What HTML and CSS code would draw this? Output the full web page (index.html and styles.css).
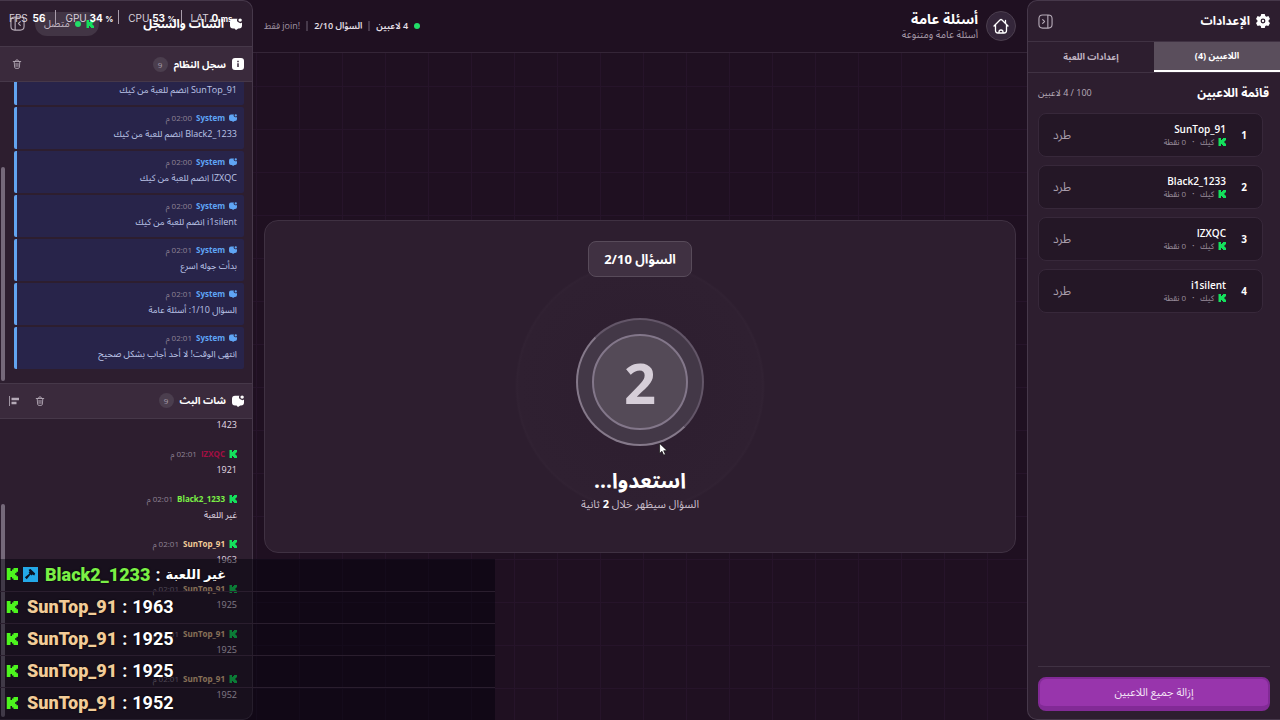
FILE: index.html
```
<!DOCTYPE html>
<html lang="ar" dir="rtl">
<head>
  <meta charset="UTF-8" />
  <meta name="viewport" content="width=device-width, initial-scale=1.0"/>
  <title>أسئلة عامة</title>
  <link rel="stylesheet" href="styles.css">
</head>
<body>
  <!-- Shared icons -->
  <svg class="sprite" aria-hidden="true">
    <symbol id="kick" viewBox="0 0 16 16">
      <path fill="currentColor" d="M1 0h5v4h2V2h2V0h6v5h-2v2h-2v2h2v2h2v5h-6v-2H8v-2H6v4H1z"/>
    </symbol>
    <symbol id="chat" viewBox="0 0 16 16">
      <path fill="currentColor" d="M4 1h6a3 3 0 0 0 2 5 3 3 0 0 0 4 0v4a4 4 0 0 1-4 4h-1l-3 2-2-2H4a4 4 0 0 1-4-4V5a4 4 0 0 1 4-4z"/>
      <circle cx="13.500" cy="2.800" r="2.300" fill="currentColor"/>
    </symbol>
    <symbol id="trash" viewBox="0 0 16 16">
      <path fill="none" stroke="currentColor" stroke-width="1.4" stroke-linecap="round" stroke-linejoin="round" d="M2 4h12M5.500 4l1-2.500h3l1 2.500M3.500 4l.7 9q.1 2 2 2h3.600q1.900 0 2-2l.7-9M6.500 7v5M9.500 7v5"/>
    </symbol>
    <symbol id="panel" viewBox="0 0 16 16">
      <path fill="none" stroke="currentColor" stroke-width="1.200" stroke-linecap="round" stroke-linejoin="round" d="M5 1h6q4 0 4 4v6q0 4-4 4H5q-4 0-4-4V5q0-4 4-4zM10.500 1v14M5 6l2 2-2 2"/>
    </symbol>
  </svg>

  <div class="app">
    <!-- Settings panel -->
    <aside class="panel settings">
      <header class="panel-header">
        <svg class="icon-lg" viewBox="0 0 16 16"><path fill="#fff" fill-rule="evenodd" d="M6 0h4l.6 2.200 1.400.8 2.200-.6 1.800 3.200L14.400 7.200v1.600L16 10.400l-1.800 3.200-2.200-.6-1.400.8L10 16H6l-.6-2.200L4 13l-2.200.6L0 10.400l1.600-1.600V7.200L0 5.600l1.800-3.200L4 3l1.400-.8zM8 5.200a2.800 2.800 0 1 0 0 5.600 2.800 2.800 0 1 0 0-5.600z"/><circle cx="8" cy="8" r="1.300" fill="#fff"/></svg>
        <h2>الإعدادات</h2>
        <button class="icon-btn push" aria-label="طي الإعدادات"><svg class="icon-xl"><use href="#panel"/></svg></button>
      </header>
      <nav class="tabs">
        <button class="tab active">اللاعبين (4)</button>
        <button class="tab">إعدادات اللعبة</button>
      </nav>
      <div class="players">
        <div class="players-title">
          <h3>قائمة اللاعبين</h3>
          <span>100 / 4 لاعبين</span>
        </div>
        <ul class="player-list">
          <li class="player">
            <b class="rank">1</b>
            <div class="player-info"><strong>SunTop_91</strong><small><svg class="kick"><use href="#kick"/></svg>كيك<i>•</i>0 نقطة</small></div>
            <button class="kick-btn">طرد</button>
          </li>
          <li class="player">
            <b class="rank">2</b>
            <div class="player-info"><strong>Black2_1233</strong><small><svg class="kick"><use href="#kick"/></svg>كيك<i>•</i>0 نقطة</small></div>
            <button class="kick-btn">طرد</button>
          </li>
          <li class="player">
            <b class="rank">3</b>
            <div class="player-info"><strong>IZXQC</strong><small><svg class="kick"><use href="#kick"/></svg>كيك<i>•</i>0 نقطة</small></div>
            <button class="kick-btn">طرد</button>
          </li>
          <li class="player">
            <b class="rank">4</b>
            <div class="player-info"><strong>i1silent</strong><small><svg class="kick"><use href="#kick"/></svg>كيك<i>•</i>0 نقطة</small></div>
            <button class="kick-btn">طرد</button>
          </li>
        </ul>
      </div>
      <footer class="panel-footer">
        <button class="remove-btn">إزالة جميع اللاعبين</button>
      </footer>
    </aside>

    <!-- Game -->
    <main class="game">
      <header class="game-header">
        <button class="home-btn" aria-label="الرئيسية">
          <svg class="icon-home" viewBox="0 0 16 16"><path fill="none" stroke="#fff" stroke-width="1.300" stroke-linecap="round" stroke-linejoin="round" d="M1 8l6-6q1-1 2 0l6 6M12.500 5V2.500M2.500 7v5.500q0 2.500 2.500 2.500h6q2.500 0 2.500-2.500V7M6 15v-1q0-2 2-2t2 2V15"/></svg>
        </button>
        <div class="game-title">
          <h1>أسئلة عامة</h1>
          <p>أسئلة عامة ومتنوعة</p>
        </div>
        <div class="game-stats">
          <span class="dot"></span>
          <b>4 لاعبين</b>
          <span class="bar"></span>
          <b>السؤال 2/10</b>
          <span class="bar"></span>
          <span class="join">!join فقط</span>
        </div>
      </header>
      <div class="stage">
        <section class="question-card">
          <div class="question-badge">السؤال 2/10</div>
          <div class="countdown"><div class="countdown-inner">2</div></div>
          <h2>استعدوا...</h2>
          <p>السؤال سيظهر خلال <b>2</b> ثانية</p>
        </section>
      </div>
    </main>

    <!-- Chat and log panel -->
    <aside class="panel chat-panel">
      <header class="panel-header chat-header">
        <svg class="icon-md"><use href="#chat"/></svg>
        <h2>الشات والسجل</h2>
        <div class="status push"><svg class="kick"><use href="#kick"/></svg><span class="dot"></span>متصل</div>
        <button class="icon-btn" aria-label="طي الشات"><svg class="icon-xl flip"><use href="#panel"/></svg></button>
      </header>

      <div class="section-header">
        <svg class="icon-md" viewBox="0 0 16 16"><rect width="16" height="16" rx="4" fill="#fff"/><path stroke="#3a2a3d" stroke-width="2" d="M8 7v5M8 3.500v2"/></svg>
        <h3>سجل النظام</h3>
        <span class="count">9</span>
        <button class="icon-btn push" aria-label="مسح السجل"><svg class="icon-sm"><use href="#trash"/></svg></button>
      </div>
      <div class="scroll-box">
        <ul class="log">
          <li><div class="meta"><svg class="mini"><use href="#chat"/></svg><b>System</b><time>02:00 م</time></div><p>SunTop_91 انضم للعبة من كيك</p></li>
          <li><div class="meta"><svg class="mini"><use href="#chat"/></svg><b>System</b><time>02:00 م</time></div><p>Black2_1233 انضم للعبة من كيك</p></li>
          <li><div class="meta"><svg class="mini"><use href="#chat"/></svg><b>System</b><time>02:00 م</time></div><p>IZXQC انضم للعبة من كيك</p></li>
          <li><div class="meta"><svg class="mini"><use href="#chat"/></svg><b>System</b><time>02:00 م</time></div><p>i1silent انضم للعبة من كيك</p></li>
          <li><div class="meta"><svg class="mini"><use href="#chat"/></svg><b>System</b><time>02:01 م</time></div><p>بدأت جوله اسرع</p></li>
          <li><div class="meta"><svg class="mini"><use href="#chat"/></svg><b>System</b><time>02:01 م</time></div><p>السؤال 1/10: أسئلة عامة</p></li>
          <li><div class="meta"><svg class="mini"><use href="#chat"/></svg><b>System</b><time>02:01 م</time></div><p>انتهى الوقت! لا أحد أجاب بشكل صحيح</p></li>
        </ul>
        <span class="thumb"></span>
      </div>

      <div class="section-header">
        <svg class="icon-md"><use href="#chat"/></svg>
        <h3>شات البث</h3>
        <span class="count">9</span>
        <button class="icon-btn push" aria-label="مسح الشات"><svg class="icon-sm"><use href="#trash"/></svg></button>
        <button class="icon-btn align" aria-label="محاذاة"><svg class="icon-sm" viewBox="0 0 12 12"><path fill="currentColor" d="M0 0h1v12H0zM3 2h9v3H3zM3 7h6v3H3z"/></svg></button>
      </div>
      <div class="scroll-box">
        <ul class="messages">
          <li><p>1423</p></li>
          <li><div class="meta"><svg class="mini kick"><use href="#kick"/></svg><b class="red">IZXQC</b><time>02:01 م</time></div><p>1921</p></li>
          <li><div class="meta"><svg class="mini kick"><use href="#kick"/></svg><b class="green">Black2_1233</b><time>02:01 م</time></div><p>غير اللعبة</p></li>
          <li><div class="meta"><svg class="mini kick"><use href="#kick"/></svg><b class="sand">SunTop_91</b><time>02:01 م</time></div><p>1963</p></li>
          <li><div class="meta"><svg class="mini kick"><use href="#kick"/></svg><b class="sand">SunTop_91</b><time>02:01 م</time></div><p>1925</p></li>
          <li><div class="meta"><svg class="mini kick"><use href="#kick"/></svg><b class="sand">SunTop_91</b><time>02:01 م</time></div><p>1925</p></li>
          <li><div class="meta"><svg class="mini kick"><use href="#kick"/></svg><b class="sand">SunTop_91</b><time>02:01 م</time></div><p>1952</p></li>
        </ul>
        <span class="thumb"></span>
      </div>
    </aside>
  </div>

  <!-- Performance overlay -->
  <div class="perf" dir="ltr">
    <span>FPS <b class="wide">56</b></span>
    <span>GPU <b>34 <small>%</small></b></span>
    <span>CPU <b>53 <small>%</small></b></span>
    <span>LAT <b>0 <small>ms</small></b></span>
  </div>

  <!-- Stream chat overlay -->
  <ul class="stream-chat" dir="ltr">
    <li><svg class="kick"><use href="#kick"/></svg><svg class="mod" viewBox="0 0 16 16"><rect width="16" height="16" fill="#24a8e8"/><path fill="#0b1020" d="M6 3l2-1 5 5-1 2-2-1-1 1-1-1-4 5-2-2 5-4-1-1 1-1z"/></svg><b class="green">Black2_1233</b><span>:</span><bdi>غير اللعبة</bdi></li>
    <li><svg class="kick"><use href="#kick"/></svg><b class="sand">SunTop_91</b><span>:</span>1963</li>
    <li><svg class="kick"><use href="#kick"/></svg><b class="sand">SunTop_91</b><span>:</span>1925</li>
    <li><svg class="kick"><use href="#kick"/></svg><b class="sand">SunTop_91</b><span>:</span>1925</li>
    <li><svg class="kick"><use href="#kick"/></svg><b class="sand">SunTop_91</b><span>:</span>1952</li>
  </ul>

  <!-- Cursor -->
  <svg class="cursor" viewBox="0 0 10 15"><path fill="#fff" stroke="#000" stroke-width=".7" d="M.5.5v11.500l2.700-2.500 2 4.500 2-1-2-4.200h4z"/></svg>
</body>
</html>
```
FILE: styles.css
```
* {
  margin: 0;
  padding: 0;
  box-sizing: border-box;
}

body {
  position: relative;
  height: 100vh;
  overflow: hidden;
  background: #1f1021;
  color: #fff;
  font-family: 'Open Sans', 'Noto Sans', 'Noto Sans Arabic', 'DejaVu Sans', sans-serif;
  font-size: 10px;
}

ul {
  list-style: none;
}

button {
  border: none;
  background: none;
  color: inherit;
  font: inherit;
  cursor: pointer;
}

svg {
  display: block;
  flex: none;
}

.sprite {
  display: none;
}

.app {
  display: grid;
  grid-template-columns: 253px 1fr 253px;
  height: 100%;
}

/* Panels */
.panel {
  display: flex;
  flex-direction: column;
  min-height: 0;
  background: #2d1e2f;
  border: 1px solid #46384a;
}

.settings {
  border-right: none;
  border-radius: 10px 0 0 10px;
}

.chat-panel {
  border-left: none;
  border-radius: 0 10px 10px 0;
}

.panel-header {
  display: flex;
  align-items: center;
  gap: 6px;
  height: 40px;
  padding: 0 10px;
}

.panel-header h2 {
  font-size: 12px;
  line-height: 20px;
}

.chat-header {
  height: 45px;
}

.push {
  margin-right: auto;
}

.icon-btn {
  color: #b5aab7;
}

.icon-sm { width: 10px; height: 10px; }
.icon-md { width: 12px; height: 12px; }
.icon-lg { width: 14px; height: 14px; }
.icon-xl { width: 15px; height: 15px; }
.icon-home { width: 16px; height: 16px; }

.flip {
  transform: scaleX(-1);
}

.kick {
  width: 8px;
  height: 8px;
  color: #14e05c;
}

.dot {
  width: 6px;
  height: 6px;
  border-radius: 50%;
  background: #22dd68;
}

.status {
  display: flex;
  align-items: center;
  gap: 5px;
  height: 24px;
  margin-left: 4px;
  padding: 0 5px 0 9px;
  border-radius: 12px;
  background: #423545;
  color: #c4bac5;
}

/* Settings tabs */
.tabs {
  display: grid;
  grid-template-columns: 1fr 1fr;
  border-top: 1px solid #403243;
  border-bottom: 1px solid #403243;
}

.tab {
  height: 30px;
  color: #c3b8c5;
  font-size: 9px;
  font-weight: bold;
}

.tab.active {
  background: #5a4e5c;
  border-bottom: 2px solid #fff;
  color: #fff;
}

/* Players */
.players {
  flex: 1;
  min-height: 0;
  padding: 10px 11px 0 10px;
}

.players-title {
  display: flex;
  align-items: center;
  justify-content: space-between;
  height: 20px;
  color: #b8adba;
  font-size: 9px;
}

.players-title h3 {
  color: #fff;
  font-size: 12px;
}

.player-list {
  display: grid;
  gap: 8px;
  padding: 10px 6px 0 0;
}

.player {
  display: flex;
  align-items: center;
  gap: 10px;
  height: 44px;
  padding: 0 10px 0 10px;
  border: 1px solid #37283a;
  border-radius: 8px;
  background: #241726;
}

.rank {
  width: 16px;
  text-align: center;
}

.player-info {
  flex: 1;
}

.player-info strong {
  display: block;
  font-weight: 600;
  line-height: 14px;
}

.player-info small {
  display: flex;
  align-items: center;
  gap: 4px;
  color: #9b8f9d;
  font-size: 8px;
  line-height: 12px;
}

.player-info i {
  padding: 0 2px;
  font-size: 6px;
}

.kick-btn {
  padding: 4px;
  color: #a99dab;
  font-size: 12px;
}

.panel-footer {
  margin: 0 10px;
  padding: 10px 0 8px;
  border-top: 1px solid #403243;
}

.remove-btn {
  width: 100%;
  height: 34px;
  border: 2px solid #822a96;
  border-bottom-width: 5px;
  border-radius: 8px;
  background: #9835ac;
  color: #f3e4f6;
  font-size: 11px;
}

/* Game area */
.game {
  display: flex;
  flex-direction: column;
  background-color: #1f1021;
  background-image:
    linear-gradient(to right, #26142a 1px, transparent 1px),
    linear-gradient(#26142a 1px, transparent 1px);
  background-size: 43px 43px;
  background-position: 3px 0;
}

.game-header {
  display: flex;
  align-items: center;
  gap: 8px;
  height: 53px;
  padding: 0 11px;
  background: #1f1021;
  border-bottom: 1px solid #342537;
}

.home-btn {
  display: grid;
  place-items: center;
  width: 30px;
  height: 30px;
  border: 1px solid #4b3e4e;
  border-radius: 50%;
  background: #34263a;
}

.game-title {
  flex: 1;
}

.game-title h1 {
  font-size: 14px;
  line-height: 16px;
}

.game-title p {
  color: #a99dab;
  line-height: 14px;
}

.game-stats {
  display: flex;
  align-items: center;
  gap: 6px;
  color: #e8e0e9;
  font-size: 9px;
}

.game-stats b {
  font-weight: 600;
}

.join {
  color: #a195a4;
}

.bar {
  width: 2px;
  height: 10px;
  background: #46394a;
}

.stage {
  flex: 1;
  display: flex;
  align-items: center;
  padding: 0 11px;
}

.question-card {
  flex: 1;
  display: flex;
  flex-direction: column;
  align-items: center;
  padding: 20px 20px 38px;
  border: 1px solid #3f3142;
  border-radius: 14px;
  background: radial-gradient(circle at 50% 50%, #2d1e2f 0, #2f2031 121px, #312233 123px, #2d1e2f 125px);
}

.question-badge {
  height: 36px;
  padding: 0 15px;
  border: 1px solid #584b5a;
  border-radius: 8px;
  background: #403142;
  font-size: 13px;
  font-weight: bold;
  line-height: 34px;
}

.countdown {
  display: grid;
  place-items: center;
  width: 128px;
  height: 128px;
  margin: 41px 0 20px;
  border: 2px solid #85798a;
  border-top-color: #635668;
  border-right-color: #635668;
  border-radius: 50%;
  background: #433847;
}

.countdown-inner {
  width: 96px;
  height: 96px;
  border: 2px solid #83778a;
  border-radius: 50%;
  background: #544a57;
  color: #d6ced8;
  font-size: 56px;
  font-weight: bold;
  line-height: 92px;
  text-align: center;
}

.question-card h2 {
  font-size: 21px;
  line-height: 28px;
}

.question-card p {
  color: #c7bcc9;
  font-size: 11px;
  line-height: 20px;
}

.question-card p b {
  color: #fff;
}

/* Log and chat sections */
.section-header {
  display: flex;
  align-items: center;
  gap: 6px;
  height: 36px;
  padding: 0 8px 0 10px;
  border-top: 1px solid #463849;
  border-bottom: 1px solid #463849;
  background: #3a2a3c;
}

.section-header h3 {
  font-size: 10px;
}

.section-header .icon-btn {
  padding: 2px;
}

.section-header .align {
  margin: 0 6px 0 -3px;
}

.count {
  width: 15px;
  height: 15px;
  border-radius: 50%;
  background: #4b3e4e;
  color: #a99dab;
  font-size: 8px;
  line-height: 15px;
  text-align: center;
}

.scroll-box {
  position: relative;
  flex: 1 1 0;
  min-height: 0;
  display: flex;
  flex-direction: column;
  justify-content: flex-end;
  overflow: hidden;
}

.thumb {
  position: absolute;
  left: 1px;
  bottom: 2px;
  width: 4px;
  height: 71%;
  border-radius: 2px;
  background: #75697a;
}

.log,
.messages {
  display: grid;
  gap: 2px;
  padding: 0 8px 14px 14px;
  font-size: 9px;
}

.log li {
  height: 42px;
  padding: 4px 7px;
  border-left: 3px solid #62a4f0;
  border-radius: 2px;
  background: #28244a;
}

.log b,
.log svg {
  color: #5fa5f5;
}

.log p {
  color: #bcc4e8;
}

.messages {
  padding-bottom: 8px;
}

.messages li {
  display: flex;
  flex-direction: column;
  justify-content: flex-end;
  height: 43px;
  padding: 4px 7px 8px;
}

.messages p {
  color: #e4dce6;
}

.log p,
.messages p {
  line-height: 17px;
}

.meta {
  display: flex;
  align-items: center;
  gap: 4px;
  font-size: 8px;
  line-height: 14px;
}

.meta time {
  color: #8f8395;
}

.mini {
  width: 8px;
  height: 8px;
}

.red { color: #a40f43; }
.green { color: #7bf046; }
.sand { color: #f2cc98; }

/* Performance overlay */
.perf {
  position: absolute;
  top: 10px;
  left: 0;
  display: flex;
  font-family: Inter, sans-serif;
  font-size: 10px;
  line-height: 17px;
  color: #d8d0da;
}

.perf span {
  height: 14px;
  padding: 0 5px 0 9px;
  border-right: 1px solid #a99dab;
}

.perf span:last-child {
  border: none;
}

.perf b {
  color: #fff;
}

.perf .wide {
  padding: 0 5px 0 2px;
}

.perf small {
  font-size: 8px;
}

/* Stream chat overlay */
.stream-chat {
  position: absolute;
  left: 0;
  bottom: 0;
  width: 495px;
  padding-bottom: 1px;
  background: rgba(0, 0, 8, 0.45);
  font-family: Roboto, 'Liberation Sans', 'DejaVu Sans', sans-serif;
  font-size: 18px;
  font-weight: bold;
}

.stream-chat li {
  display: flex;
  align-items: center;
  gap: 5px;
  height: 32px;
  padding: 0 0 2px 6px;
  border-top: 1px solid #2a1e2e;
  text-shadow: 0 0 2px #000;
}

.stream-chat li:first-child {
  border: none;
}

.stream-chat bdi {
  font-size: 13px;
}

.stream-chat .kick {
  width: 12px;
  height: 12px;
  color: #4df51e;
}

.stream-chat .kick + b {
  margin-left: 4px;
}

.stream-chat .mod {
  width: 15px;
  height: 15px;
  margin-right: 2px;
}

.cursor {
  position: absolute;
  left: 659px;
  top: 443px;
  width: 9px;
  height: 13px;
}
```
